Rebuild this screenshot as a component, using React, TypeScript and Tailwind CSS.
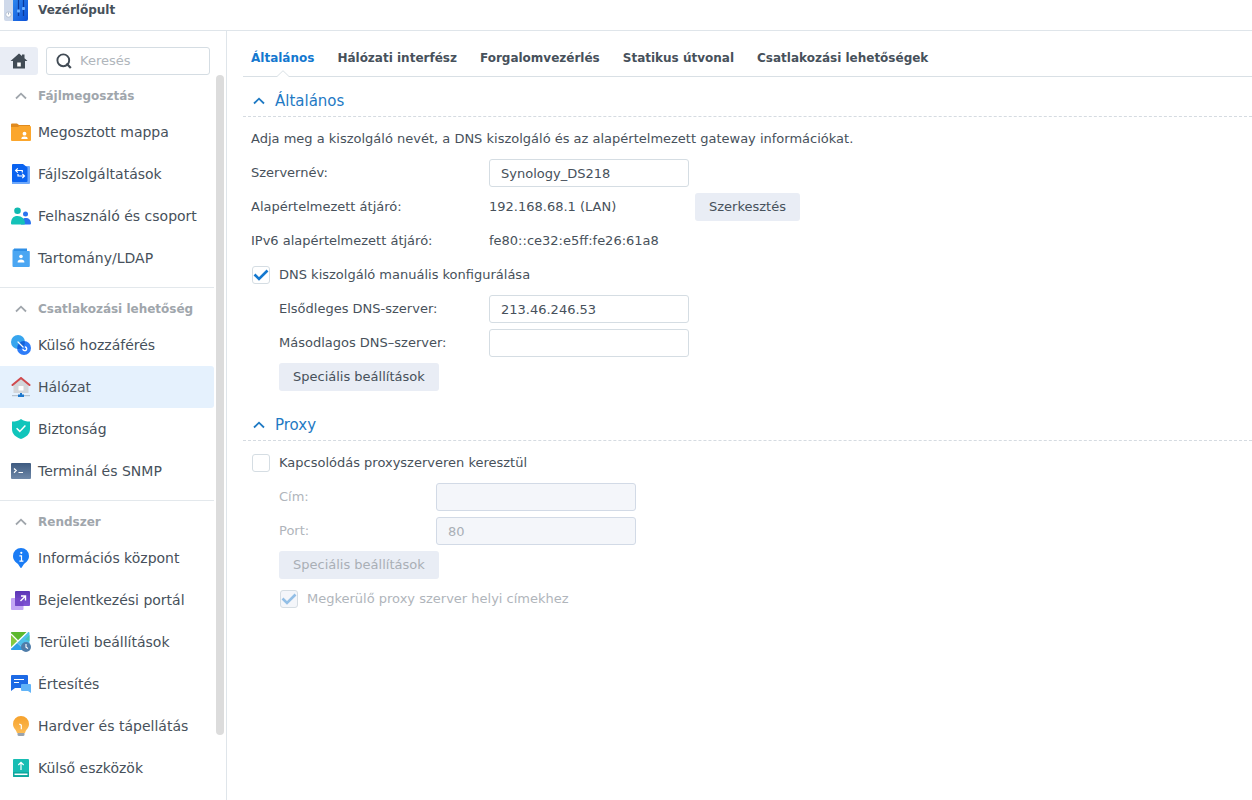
import { useState, ReactNode, InputHTMLAttributes, ButtonHTMLAttributes } from 'react';

interface NavItem {
    id: string;
    label: string;
    icon: ReactNode;
}

interface NavGroup {
    title: string;
    items: NavItem[];
}

const SharedFolderIcon = () => (
    <svg viewBox="0 0 20 20" className="w-5 h-5 shrink-0" aria-hidden="true">
        <path d="M0 2.500a1 1 0 0 1 1-1h5l2 1.500h11v10H0z" fill="#e08a1e" />
        <path d="M0 5h7l1.500-1H19a1 1 0 0 1 1 1v13a1 1 0 0 1-1 1H1a1 1 0 0 1-1-1z" fill="#fba62c" />
        <circle cx="13.500" cy="11.700" r="1.900" fill="#fff" />
        <path d="M10.300 17c0-1.900 1-2.600 3.200-2.600s3.200.7 3.200 2.600z" fill="#fff" />
    </svg>
);

const FileServicesIcon = () => (
    <svg viewBox="0 0 20 20" className="w-5 h-5 shrink-0" aria-hidden="true">
        <path d="M4 2h14a1 1 0 0 1 1 1v16a1 1 0 0 1-1 1H1V18z" fill="#6ea8fa" />
        <path d="M1 1a1 1 0 0 1 1-1h10l4.500 3.500V17a1 1 0 0 1-1 1H2a1 1 0 0 1-1-1z" fill="#0a63f0" />
        <path d="M6.800 4.300 4.600 6.500l2.200 2.200M4.800 6.500h6.500v2M11.300 9.800l2.200 2.200-2.200 2.200M13.300 12H7v-2" fill="none" stroke="#fff" strokeWidth="1.200" />
    </svg>
);

const UsersIcon = () => (
    <svg viewBox="0 0 20 20" className="w-5 h-5 shrink-0" aria-hidden="true">
        <circle cx="6.500" cy="4.800" r="3.300" fill="#10b9b0" />
        <circle cx="14.500" cy="8" r="2.500" fill="#2b74f0" />
        <path d="M10 18.500c0-4.500 1.500-6.500 4.700-6.500s5.300 2 5.300 5.500a1 1 0 0 1-1 1z" fill="#2b74f0" />
        <path d="M0 17.500C0 12.500 2.200 10 6.500 10s7.500 3 7.500 7.500a1 1 0 0 1-1 1H1a1 1 0 0 1-1-1z" fill="#14c2b8" />
    </svg>
);

const DirectoryIcon = () => (
    <svg viewBox="0 0 20 20" className="w-5 h-5 shrink-0" aria-hidden="true">
        <path d="M3 .5h13v6H3z" fill="#2f8fe6" />
        <path d="M1.500 2.500A1.500 1.500 0 0 1 3 1v2h15a.8.8 0 0 1 .8.800v14.200a1 1 0 0 1-1 1H2.500a1 1 0 0 1-1-1z" fill="#4ba6f2" />
        <circle cx="10" cy="8.500" r="1.800" fill="#fff" />
        <path d="M6.600 14.500c0-2.200 1.200-3 3.400-3s3.400.8 3.400 3z" fill="#fff" />
    </svg>
);

const ExternalAccessIcon = () => (
    <svg viewBox="0 0 20 20" className="w-5 h-5 shrink-0" aria-hidden="true">
        <circle cx="7" cy="7" r="7" fill="#37a5ee" />
        <circle cx="13" cy="13" r="7" fill="#2d7cf8" />
        <path d="M13 6a7 7 0 0 1 1 1 7 7 0 0 1-7.500 7A7 7 0 0 1 13 6z" fill="#1463d8" />
        <path d="m7 7 5 5" stroke="#fff" strokeWidth="1.200" strokeLinecap="round" />
        <path d="M14.500 12a1.900 1.900 0 1 1-2.500 2.400" fill="none" stroke="#fff" strokeWidth="1.400" strokeLinecap="round" />
    </svg>
);

const NetworkIcon = () => (
    <svg viewBox="0 0 20 20" className="w-5 h-5 shrink-0" aria-hidden="true">
        <path d="M2.500 7.500 10 1.500l7.500 6V16h-15z" fill="#d3d6da" />
        <path d="m1.500 8 8.500-7 8.500 7" fill="none" stroke="#d04a4e" strokeWidth="2" strokeLinecap="round" />
        <rect x="7.500" y="9" width="5" height="4.500" rx=".5" fill="#fff" />
        <path d="M1 18.700h18" stroke="#aab7c4" strokeWidth="1" />
        <path d="M9 16h2v1.500h2V20H7v-2.500h2z" fill="#1f78cc" />
    </svg>
);

const SecurityIcon = () => (
    <svg viewBox="0 0 20 20" className="w-5 h-5 shrink-0" aria-hidden="true">
        <path d="M10 0c2.500 1.800 5.500 2.600 9 2.600V10c0 5-3.500 8-9 10-5.500-2-9-5-9-10V2.600C4.500 2.600 7.500 1.800 10 0z" fill="#10c5bb" />
        <path d="m5.600 9.200 3.200 3.200 5.600-5.800" fill="none" stroke="#fff" strokeWidth="1.500" />
    </svg>
);

const TerminalIcon = () => (
    <svg viewBox="0 0 20 20" className="w-5 h-5 shrink-0" aria-hidden="true">
        <defs>
            <linearGradient id="terminal" x1="0" y1="0" x2="0" y2="1">
                <stop offset="0" stopColor="#3d5a80" />
                <stop offset="1" stopColor="#6f88a8" />
            </linearGradient>
        </defs>
        <rect y="2" width="20" height="16" rx="1" fill="url(#terminal)" />
        <path d="M3 7.500 5.200 9.600 3 11.700M7.500 11.500h4.500" fill="none" stroke="#fff" strokeWidth="1.200" />
    </svg>
);

const InfoCenterIcon = () => (
    <svg viewBox="0 0 20 20" className="w-5 h-5 shrink-0" aria-hidden="true">
        <path d="M10 0a8 8 0 0 1 8 8c0 4-2.500 6-5 8l-2.300 3.600a.9.9 0 0 1-1.400 0L7 16c-2.500-2-5-4-5-8a8 8 0 0 1 8-8z" fill="#1a7cf5" />
        <circle cx="10.300" cy="4.800" r="1.100" fill="#fff" />
        <path d="M8.400 7.800h2.100v5.200M8.400 13.200h4" fill="none" stroke="#fff" strokeWidth="1.200" />
    </svg>
);

const LoginPortalIcon = () => (
    <svg viewBox="0 0 20 20" className="w-5 h-5 shrink-0" aria-hidden="true">
        <defs>
            <linearGradient id="portal" x1="0" y1="0" x2="0" y2="1">
                <stop offset="0" stopColor="#5b35b5" />
                <stop offset="1" stopColor="#8256d6" />
            </linearGradient>
        </defs>
        <rect y="8" width="12.500" height="12" rx="1" fill="#c3a6f5" />
        <rect x="4" y="1" width="15" height="15" rx="1" fill="url(#portal)" />
        <path d="M4 8h7.500a1 1 0 0 1 1 1v7H5a1 1 0 0 1-1-1z" fill="#7447c9" />
        <path d="M9.500 11 14 6.500M10 6h4.500v4.500" fill="none" stroke="#fff" strokeWidth="1.400" />
    </svg>
);

const RegionalIcon = () => (
    <svg viewBox="0 0 20 20" className="w-5 h-5 shrink-0" aria-hidden="true">
        <rect width="18.500" height="18" rx="1" fill="#4fc0ea" />
        <path d="M1 0h15L0 15V1a1 1 0 0 1 1-1z" fill="#5cb82e" />
        <path d="M0 3 6.500 9 0 15z" fill="#84c93e" />
        <path d="M18.500 3v6L14 7.500z" fill="#45c4b4" />
        <path d="M1 18a1 1 0 0 1-1-1v-.5L6.500 10l8 8z" fill="#2f9fe6" />
        <path d="M0 16 16.500 0M0 2l7 7" stroke="#fff" strokeWidth="1.300" />
        <path d="m6 10.500 8 7.500" stroke="#fff" strokeWidth=".8" opacity=".6" />
        <circle cx="15" cy="15" r="5" fill="#4f7da9" />
        <path d="M15 12v3.200l2 1.300" fill="none" stroke="#fff" strokeWidth="1.100" />
    </svg>
);

const NotificationIcon = () => (
    <svg viewBox="0 0 20 20" className="w-5 h-5 shrink-0" aria-hidden="true">
        <path d="M1 1h15a1 1 0 0 1 1 1v12H4l-4 3V2a1 1 0 0 1 1-1z" fill="#1d6ae5" />
        <path d="M11 10h8a1 1 0 0 1 1 1v8l-3-2h-6a1 1 0 0 1-1-1v-5a1 1 0 0 1 1-1z" fill="#62b4f8" />
        <path d="M3 5.500h10M3 8.500h5" stroke="#fff" strokeWidth="1.200" />
    </svg>
);

const HardwareIcon = () => (
    <svg viewBox="0 0 20 20" className="w-5 h-5 shrink-0" aria-hidden="true">
        <defs>
            <linearGradient id="bulb" x1="0" y1="0" x2="0" y2="1">
                <stop offset="0" stopColor="#f6a12c" />
                <stop offset="1" stopColor="#fcbc55" />
            </linearGradient>
        </defs>
        <path d="M6.500 16h7v2.500A1.500 1.500 0 0 1 12 20H8a1.500 1.500 0 0 1-1.500-1.500z" fill="#9aa3ad" />
        <path d="M10 0a8 8 0 0 1 8 8c0 4.500-3 5-4 9H6c-1-4-4-4.500-4-9a8 8 0 0 1 8-8z" fill="url(#bulb)" />
        <path d="m8.300 8 2 1.200v4" fill="none" stroke="#fff" strokeWidth="1.200" />
    </svg>
);

const ExternalDevicesIcon = () => (
    <svg viewBox="0 0 20 20" className="w-5 h-5 shrink-0" aria-hidden="true">
        <rect x="2" y="1" width="16" height="18" rx="1" fill="#18bdb3" />
        <path d="M2 14h16v4a1 1 0 0 1-1 1H3a1 1 0 0 1-1-1z" fill="#0fa89f" />
        <path d="M10 12V4.500M7.300 7 10 4.400 12.700 7" fill="none" stroke="#fff" strokeWidth="1.200" />
        <path d="M3.500 16.300h13" stroke="#fff" strokeWidth="1.500" />
    </svg>
);

const ControlPanelIcon = () => (
    <svg viewBox="0 0 24 24" className="w-6 h-6 shrink-0" aria-hidden="true">
        <defs>
            <linearGradient id="panel" x1="0" y1="0" x2="1" y2="1">
                <stop offset="0" stopColor="#2f8af0" />
                <stop offset="1" stopColor="#0b4fd6" />
            </linearGradient>
        </defs>
        <rect width="24" height="24" rx="2" fill="#cfd9ea" />
        <path d="M9 0h13a2 2 0 0 1 2 2v20a2 2 0 0 1-2 2H9z" fill="url(#panel)" />
        <path d="M14.500 3v16M19.500 3v16" stroke="#0a3a9c" strokeWidth="1.200" />
        <rect x="13" y="12.500" width="3" height="3" rx=".8" fill="#6fb2ff" />
        <rect x="18" y="10" width="3" height="3" rx=".8" fill="#6fb2ff" />
        <circle cx="4.500" cy="17.500" r="2.700" fill="#fff" stroke="#a9b8cc" strokeWidth=".8" />
        <path d="M4.500 15.500v2" stroke="#8a9bb3" strokeWidth=".8" />
    </svg>
);

const Chevron = ({ collapsed }: { collapsed: boolean }) => (
    <svg viewBox="0 0 12 8" className={collapsed ? 'w-3 h-2 shrink-0 rotate-180' : 'w-3 h-2 shrink-0'} aria-hidden="true">
        <path d="M1 6.500 6 1.700l5 4.800" fill="none" stroke="currentColor" strokeWidth="1.800" />
    </svg>
);

const groups: NavGroup[] = [
    {
        title: 'Fájlmegosztás',
        items: [
            { id: 'share', label: 'Megosztott mappa', icon: <SharedFolderIcon /> },
            { id: 'file', label: 'Fájlszolgáltatások', icon: <FileServicesIcon /> },
            { id: 'user', label: 'Felhasználó és csoport', icon: <UsersIcon /> },
            { id: 'ldap', label: 'Tartomány/LDAP', icon: <DirectoryIcon /> },
        ],
    },
    {
        title: 'Csatlakozási lehetőség',
        items: [
            { id: 'external', label: 'Külső hozzáférés', icon: <ExternalAccessIcon /> },
            { id: 'network', label: 'Hálózat', icon: <NetworkIcon /> },
            { id: 'security', label: 'Biztonság', icon: <SecurityIcon /> },
            { id: 'terminal', label: 'Terminál és SNMP', icon: <TerminalIcon /> },
        ],
    },
    {
        title: 'Rendszer',
        items: [
            { id: 'info', label: 'Információs központ', icon: <InfoCenterIcon /> },
            { id: 'portal', label: 'Bejelentkezési portál', icon: <LoginPortalIcon /> },
            { id: 'region', label: 'Területi beállítások', icon: <RegionalIcon /> },
            { id: 'notification', label: 'Értesítés', icon: <NotificationIcon /> },
            { id: 'hardware', label: 'Hardver és tápellátás', icon: <HardwareIcon /> },
            { id: 'devices', label: 'Külső eszközök', icon: <ExternalDevicesIcon /> },
        ],
    },
];

const tabs = ['Általános', 'Hálózati interfész', 'Forgalomvezérlés', 'Statikus útvonal', 'Csatlakozási lehetőségek'];

function TextField(props: InputHTMLAttributes<HTMLInputElement>) {
    return (
        <input
            type="text"
            {...props}
            className="w-[200px] h-7 px-[11px] rounded-[3px] border border-[#d5dde3] bg-white text-[#47515b] outline-none focus:border-[#057feb] disabled:bg-[#f4f6fa] disabled:border-[#d2dae6] disabled:text-[#a9afb6]"
        />
    );
}

function Button({ children, ...props }: ButtonHTMLAttributes<HTMLButtonElement>) {
    return (
        <button
            type="button"
            {...props}
            className="h-7 px-[14px] rounded-[3px] bg-[#e9edf5] text-[#47515b] whitespace-nowrap hover:bg-[#dde4ef] disabled:text-[#a9afb6] disabled:hover:bg-[#e9edf5]"
        >
            {children}
        </button>
    );
}

interface CheckboxProps {
    label: string;
    checked: boolean;
    disabled?: boolean;
    onChange: (checked: boolean) => void;
}

function Checkbox({ label, checked, disabled, onChange }: CheckboxProps) {
    return (
        <label className={disabled ? 'flex items-center gap-2 text-[#b0b5bb]' : 'flex items-center gap-2'}>
            <span className="grid w-5 place-items-center">
                <input
                    type="checkbox"
                    checked={checked}
                    disabled={disabled}
                    onChange={(e) => onChange(e.target.checked)}
                    className="col-start-1 row-start-1 appearance-none w-[18px] h-[18px] rounded-[3px] border border-[#d5dde3] bg-white disabled:checked:bg-[#f4f6fa]"
                />
                {checked && (
                    <svg viewBox="0 0 18 18" className={disabled ? 'col-start-1 row-start-1 w-[18px] h-[18px] pointer-events-none text-[#93bfe6]' : 'col-start-1 row-start-1 w-[18px] h-[18px] pointer-events-none text-[#1478cf]'} aria-hidden="true">
                        <path d="m2.500 8.500 4.500 4.500 8.500-8.500" fill="none" stroke="currentColor" strokeWidth="2.600" />
                    </svg>
                )}
            </span>
            {label}
        </label>
    );
}

function SectionTitle({ title, collapsed, onToggle }: { title: string; collapsed: boolean; onToggle: () => void }) {
    return (
        <h2 className="-ml-2 h-[31px] border-b border-dashed border-[#d5dbe1] text-[15px]/6 text-[#1f7ac4]">
            <button type="button" aria-expanded={!collapsed} onClick={onToggle} className="flex h-full items-center gap-[10px] pl-[10px]">
                <Chevron collapsed={collapsed} />
                {title}
            </button>
        </h2>
    );
}

function Sidebar() {
    const [active, setActive] = useState('network');
    const [collapsed, setCollapsed] = useState<string[]>([]);
    const [query, setQuery] = useState('');

    const toggle = (title: string) => {
        setCollapsed((prev) => (prev.includes(title) ? prev.filter((t) => t !== title) : [...prev, title]));
    };

    return (
        <aside className="flex w-[227px] shrink-0 flex-col border-r border-[#dfe5ea] pt-4">
            <div className="flex gap-2 pr-4">
                <button type="button" aria-label="Kezdőlap" className="flex h-7 w-[38px] items-center justify-center rounded-r-[3px] bg-[#e9edf5]">
                    <svg viewBox="0 0 18 16" className="w-[18px] h-4" aria-hidden="true">
                        <path d="M9 .5 12 3V1.500h2.500V5.200L17.500 8H15v7.500H3V8H.5z" fill="#414b55" />
                        <path d="M7.200 9.500h3.600v4H7.200z" fill="#fff" />
                    </svg>
                </button>
                <label className="flex h-7 min-w-0 flex-1 items-center gap-2 rounded-[3px] border border-[#d5dde3] px-[9px]">
                    <svg viewBox="0 0 16 16" className="w-4 h-4 shrink-0" aria-hidden="true">
                        <circle cx="7.300" cy="7.300" r="5.900" fill="none" stroke="#414b55" strokeWidth="1.900" />
                        <path d="m10.500 10.500 4.300 4.500" stroke="#414b55" strokeWidth="2.200" />
                    </svg>
                    <input
                        type="search"
                        value={query}
                        onChange={(e) => setQuery(e.target.value)}
                        aria-label="Keresés"
                        placeholder="Keresés"
                        className="w-full min-w-0 outline-none placeholder:text-[#b0b6bc]"
                    />
                </label>
            </div>

            <div className="flex min-h-0 flex-1 gap-[2px]">
                <nav className="min-w-0 flex-1 overflow-hidden">
                    {groups.map((group) => (
                        <div key={group.title} className="border-b border-[#e3e8ec] pb-2 last:border-b-0">
                            <button
                                type="button"
                                onClick={() => toggle(group.title)}
                                className="flex h-9 w-full items-center gap-[11px] pl-[15px] pt-[5px] text-xs font-bold text-[#a0a6ac] whitespace-nowrap"
                            >
                                <Chevron collapsed={collapsed.includes(group.title)} />
                                {group.title}
                            </button>
                            {!collapsed.includes(group.title) && (
                                <ul>
                                    {group.items.map((item) => (
                                        <li key={item.id}>
                                            <a
                                                href={`#${item.id}`}
                                                onClick={() => setActive(item.id)}
                                                className={
                                                    item.id === active
                                                        ? 'flex h-[42px] items-center gap-[7px] rounded-r-[3px] bg-[#e5f1fd] pl-[11px] text-sm whitespace-nowrap'
                                                        : 'flex h-[42px] items-center gap-[7px] rounded-r-[3px] pl-[11px] text-sm whitespace-nowrap hover:bg-[#f2f7fc]'
                                                }
                                            >
                                                {item.icon}
                                                {item.label}
                                            </a>
                                        </li>
                                    ))}
                                </ul>
                            )}
                        </div>
                    ))}
                </nav>
                <div className="mr-[2px] h-[91%] w-2 rounded-full bg-[#dcdcdc]" />
            </div>
        </aside>
    );
}

function GeneralSection() {
    const [collapsed, setCollapsed] = useState(false);
    const [serverName, setServerName] = useState('Synology_DS218');
    const [manualDns, setManualDns] = useState(true);
    const [primaryDns, setPrimaryDns] = useState('213.46.246.53');
    const [secondaryDns, setSecondaryDns] = useState('');

    return (
        <section>
            <SectionTitle title="Általános" collapsed={collapsed} onToggle={() => setCollapsed(!collapsed)} />
            {!collapsed && (
                <div className="pt-[5px]">
                    <p className="flex h-[34px] items-center">
                        Adja meg a kiszolgáló nevét, a DNS kiszolgáló és az alapértelmezett gateway információkat.
                    </p>
                    <div className="flex h-[34px] items-center">
                        <label htmlFor="server-name" className="w-[238px]">Szervernév:</label>
                        <TextField id="server-name" value={serverName} onChange={(e) => setServerName(e.target.value)} />
                    </div>
                    <div className="flex h-[34px] items-center">
                        <span className="w-[238px]">Alapértelmezett átjáró:</span>
                        <span className="mr-[6px] w-[200px]">192.168.68.1 (LAN)</span>
                        <Button>Szerkesztés</Button>
                    </div>
                    <div className="flex h-[34px] items-center">
                        <span className="w-[238px]">IPv6 alapértelmezett átjáró:</span>
                        <span>fe80::ce32:e5ff:fe26:61a8</span>
                    </div>
                    <div className="flex h-[34px] items-center">
                        <Checkbox label="DNS kiszolgáló manuális konfigurálása" checked={manualDns} onChange={setManualDns} />
                    </div>
                    <div className="pl-7">
                        <div className="flex h-[34px] items-center">
                            <label htmlFor="primary-dns" className="w-[210px]">Elsődleges DNS-szerver:</label>
                            <TextField id="primary-dns" value={primaryDns} disabled={!manualDns} onChange={(e) => setPrimaryDns(e.target.value)} />
                        </div>
                        <div className="flex h-[34px] items-center">
                            <label htmlFor="secondary-dns" className="w-[210px]">Másodlagos DNS–szerver:</label>
                            <TextField id="secondary-dns" value={secondaryDns} disabled={!manualDns} onChange={(e) => setSecondaryDns(e.target.value)} />
                        </div>
                        <div className="flex h-[34px] items-center">
                            <Button>Speciális beállítások</Button>
                        </div>
                    </div>
                </div>
            )}
        </section>
    );
}

function ProxySection() {
    const [collapsed, setCollapsed] = useState(false);
    const [enabled, setEnabled] = useState(false);
    const [address, setAddress] = useState('');
    const [port, setPort] = useState('80');
    const [bypass, setBypass] = useState(true);

    return (
        <section>
            <SectionTitle title="Proxy" collapsed={collapsed} onToggle={() => setCollapsed(!collapsed)} />
            {!collapsed && (
                <div className="pt-[5px]">
                    <div className="flex h-[34px] items-center">
                        <Checkbox label="Kapcsolódás proxyszerveren keresztül" checked={enabled} onChange={setEnabled} />
                    </div>
                    <div className={enabled ? 'pl-7' : 'pl-7 text-[#b0b5bb]'}>
                        <div className="flex h-[34px] items-center">
                            <label htmlFor="proxy-address" className="w-[157px]">Cím:</label>
                            <TextField id="proxy-address" value={address} disabled={!enabled} onChange={(e) => setAddress(e.target.value)} />
                        </div>
                        <div className="flex h-[34px] items-center">
                            <label htmlFor="proxy-port" className="w-[157px]">Port:</label>
                            <TextField id="proxy-port" value={port} disabled={!enabled} onChange={(e) => setPort(e.target.value)} />
                        </div>
                        <div className="flex h-[34px] items-center">
                            <Button disabled={!enabled}>Speciális beállítások</Button>
                        </div>
                        <div className="flex h-[34px] items-center">
                            <Checkbox label="Megkerülő proxy szerver helyi címekhez" checked={bypass} disabled={!enabled} onChange={setBypass} />
                        </div>
                    </div>
                </div>
            )}
        </section>
    );
}

export default function App() {
    const [tab, setTab] = useState(tabs[0]);

    return (
        <div className="flex h-screen flex-col overflow-hidden bg-white font-[Verdana,'DejaVu_Sans',sans-serif] text-[13px]/5 text-[#47515b]">
            <header className="flex h-[31px] shrink-0 items-start gap-[10px] border-b border-[#dfe5ea] pl-1">
                <div className="-mt-[3px]">
                    <ControlPanelIcon />
                </div>
                <h1 className="text-xs/5 font-bold">Vezérlőpult</h1>
            </header>

            <div className="flex min-h-0 flex-1">
                <Sidebar />
                <main className="min-w-0 flex-1 overflow-y-auto pl-4">
                    <div role="tablist" className="flex h-[46px] gap-[23px] border-b border-[#d9e0e5] pl-2 text-xs font-bold">
                        {tabs.map((name) => (
                            <button
                                key={name}
                                type="button"
                                role="tab"
                                aria-selected={tab === name}
                                onClick={() => setTab(name)}
                                className={
                                    tab === name
                                        ? 'relative h-[46px] pt-2 whitespace-nowrap text-[#1478cf]'
                                        : 'relative h-[46px] pt-2 whitespace-nowrap hover:text-[#1478cf]'
                                }
                            >
                                {name}
                                {tab === name && (
                                    <svg viewBox="0 0 12 7" className="absolute bottom-0 left-1/2 h-[7px] w-3 -translate-x-1/2" aria-hidden="true">
                                        <path d="M0 6.500 6 .7l6 5.800V7H0z" fill="#fff" />
                                        <path d="M0 6.500 6 .7l6 5.800" fill="none" stroke="#d9e0e5" />
                                    </svg>
                                )}
                            </button>
                        ))}
                    </div>
                    <div className="space-y-4 pl-2 pt-[9px]">
                        <GeneralSection />
                        <ProxySection />
                    </div>
                </main>
            </div>
        </div>
    );
}
